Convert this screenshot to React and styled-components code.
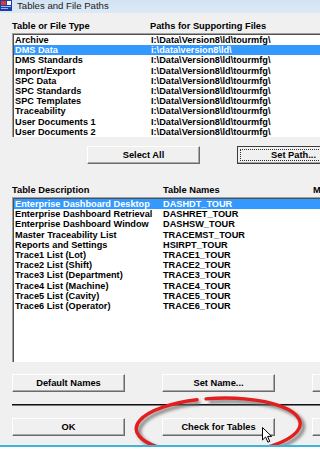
import React from 'react'
import styled, { createGlobalStyle } from 'styled-components'

const fileTypes = [
    { name: 'Archive', path: 'I:\\Data\\Version8\\ld\\tourmfg\\' },
    { name: 'DMS Data', path: 'i:\\data\\version8\\ld\\', selected: true },
    { name: 'DMS Standards', path: 'I:\\Data\\Version8\\ld\\tourmfg\\' },
    { name: 'Import/Export', path: 'I:\\Data\\Version8\\ld\\tourmfg\\' },
    { name: 'SPC Data', path: 'I:\\Data\\Version8\\ld\\tourmfg\\' },
    { name: 'SPC Standards', path: 'I:\\Data\\Version8\\ld\\tourmfg\\' },
    { name: 'SPC Templates', path: 'I:\\Data\\Version8\\ld\\tourmfg\\' },
    { name: 'Traceability', path: 'I:\\Data\\Version8\\ld\\tourmfg\\' },
    { name: 'User Documents 1', path: 'I:\\Data\\Version8\\ld\\tourmfg\\' },
    { name: 'User Documents 2', path: 'I:\\Data\\Version8\\ld\\tourmfg\\' },
]

const tables = [
    { name: 'Enterprise Dashboard Desktop', table: 'DASHDT_TOUR', selected: true },
    { name: 'Enterprise Dashboard Retrieval', table: 'DASHRET_TOUR' },
    { name: 'Enterprise Dashboard Window', table: 'DASHSW_TOUR' },
    { name: 'Master Traceability List', table: 'TRACEMST_TOUR' },
    { name: 'Reports and Settings', table: 'HSIRPT_TOUR' },
    { name: 'Trace1 List (Lot)', table: 'TRACE1_TOUR' },
    { name: 'Trace2 List (Shift)', table: 'TRACE2_TOUR' },
    { name: 'Trace3 List (Department)', table: 'TRACE3_TOUR' },
    { name: 'Trace4 List (Machine)', table: 'TRACE4_TOUR' },
    { name: 'Trace5 List (Cavity)', table: 'TRACE5_TOUR' },
    { name: 'Trace6 List (Operator)', table: 'TRACE6_TOUR' },
]

const App = () => {
    return (
        <>
        <GlobalStyle />
        <Window>
            <TitleBar>
                <svg width="13" height="11" viewBox="0 0 13 11">
                    <rect x="0" y="0" width="12" height="11" fill="#1c3ea8" />
                    <rect x="1" y="1" width="5" height="4" fill="#e23a2a" />
                    <rect x="7" y="1" width="4" height="4" fill="#ffffff" />
                    <rect x="1" y="6" width="10" height="1" fill="#9fb6ea" />
                    <rect x="1" y="8" width="7" height="1" fill="#9fb6ea" />
                </svg>
                <TitleText>Tables and File Paths</TitleText>
            </TitleBar>

            <Content>
                <HeaderRow $first={138} $top={8}>
                    <span>Table or File Type</span>
                    <span>Paths for Supporting Files</span>
                </HeaderRow>
                <ListBox $height={104}>
                    {fileTypes.map(f => (
                        <ListRow key={f.name} $first={136} $selected={f.selected}>
                            <span>{f.name}</span>
                            <span>{f.path}</span>
                        </ListRow>
                    ))}
                </ListBox>

                <ButtonRow $top={9} $indent={75}>
                    <Button>Select All</Button>
                    <Button $focused>Set Path...</Button>
                </ButtonRow>

                <HeaderRow $first={151} $top={21}>
                    <span>Table Description</span>
                    <span>Table Names</span>
                    <span>M</span>
                </HeaderRow>
                <ListBox $height={165}>
                    {tables.map(t => (
                        <ListRow key={t.name} $first={148} $selected={t.selected}>
                            <span>{t.name}</span>
                            <span>{t.table}</span>
                        </ListRow>
                    ))}
                </ListBox>

                {/* third buttons sit past the right edge of the shot, only their frame shows */}
                <ButtonRow $top={12} $indent={0}>
                    <Button>Default Names</Button>
                    <Button>Set Name...</Button>
                    <Button />
                </ButtonRow>

                <Separator />

                <ButtonRow $top={12} $indent={0}>
                    <Button>OK</Button>
                    <Button>Check for Tables</Button>
                    <Button />
                </ButtonRow>
            </Content>

            <Annotation width="180" height="70" viewBox="0 0 180 70">
                <defs>
                    <filter id="blur" x="-10%" y="-30%" width="120%" height="160%">
                        <feGaussianBlur stdDeviation="1.6" />
                    </filter>
                </defs>
                <g transform="rotate(-2 90 34)">
                    <path d="M 77 6.4 A 82 28 0 1 1 68 7" fill="none" stroke="#6a6a6a" strokeWidth="4" opacity="0.75" filter="url(#blur)" transform="translate(3 3)" />
                    <path d="M 77 6.4 A 82 28 0 1 1 68 7" fill="none" stroke="#e41e1e" strokeWidth="3.4" strokeLinecap="round" />
                </g>
            </Annotation>

            <Cursor width="11" height="17" viewBox="0 0 11 17">
                <path d="M0.5 0.5 L0.5 13 L3.6 10 L5.9 15.2 L7.8 14.4 L5.6 9.4 L9.6 9.4 Z" fill="#ffffff" stroke="#000000" strokeWidth="1" strokeLinejoin="round" />
            </Cursor>
        </Window>
        </>
    )
}

const GlobalStyle = createGlobalStyle`
    html, body {
        margin: 0;
        padding: 0;
        background: #ffffff;
        overflow: hidden;
    }
    body {
        font-family: "Liberation Sans", Arial, sans-serif;
    }
`

const Window = styled.div`
    position: relative;
    width: 320px;
    height: 445px;
    overflow: hidden;
    background: #f0f0f0;
    border-bottom: 2px solid #3db4dc;
`

const TitleBar = styled.div`
    height: 13px;
    display: flex;
    align-items: flex-start;
    gap: 4px;
    background: linear-gradient(#d4e3f3, #dce9f6);
    svg {
        flex: none;
    }
`

const TitleText = styled.span`
    font-size: 9.6px;
    line-height: 11px;
    color: #1a1a1a;
`

const Content = styled.div`
    width: 440px;
    padding-left: 12px;
    display: flex;
    flex-direction: column;
`

const HeaderRow = styled.div`
    margin-top: ${p => p.$top}px;
    display: grid;
    grid-template-columns: ${p => p.$first}px 150px 1fr;
    font-size: 9.3px;
    font-weight: bold;
    line-height: 10px;
    height: 10px;
    margin-bottom: 2px;
    color: #000;
`

const ListBox = styled.div`
    height: ${p => p.$height}px;
    box-sizing: border-box;
    background: #ffffff;
    border-top: 1px solid #a0a0a0;
    border-left: 1px solid #a0a0a0;
    box-shadow: inset 1px 1px 0 #505050;
    padding-top: 1px;
    padding-left: 1px;
`

const ListRow = styled.div`
    display: grid;
    grid-template-columns: ${p => p.$first}px 1fr;
    height: 10.2px;
    line-height: 10.2px;
    padding-left: 1px;
    font-size: 9.2px;
    font-weight: bold;
    white-space: nowrap;
    color: ${p => p.$selected ? '#ffffff' : '#000000'};
    background: ${p => p.$selected ? '#3399ff' : 'transparent'};
`

const ButtonRow = styled.div`
    margin-top: ${p => p.$top}px;
    padding-left: ${p => p.$indent}px;
    display: flex;
    gap: 37px;
`

const Button = styled.div`
    position: relative;
    flex: none;
    width: 113px;
    height: 18px;
    box-sizing: border-box;
    display: flex;
    align-items: center;
    justify-content: center;
    font-size: 9.3px;
    font-weight: bold;
    color: #000;
    background: #f0f0f0;
    border: 1px solid;
    border-color: #ffffff #6b6b6b #6b6b6b #ffffff;
    box-shadow: inset -1px -1px 0 #a8a8a8;
    ${p => p.$focused && `
        border-color: #3c3c3c;
        &::after {
            content: '';
            position: absolute;
            inset: 2px;
            border: 1px dotted #303030;
        }
    `}
`

const Separator = styled.div`
    margin-top: 12px;
    height: 1px;
    border-top: 1px solid #111111;
    background: #7a7a7a;
`

const Annotation = styled.svg`
    position: absolute;
    left: 130px;
    top: 392px;
    pointer-events: none;
`

const Cursor = styled.svg`
    position: absolute;
    left: 262px;
    top: 427px;
`

export default App
